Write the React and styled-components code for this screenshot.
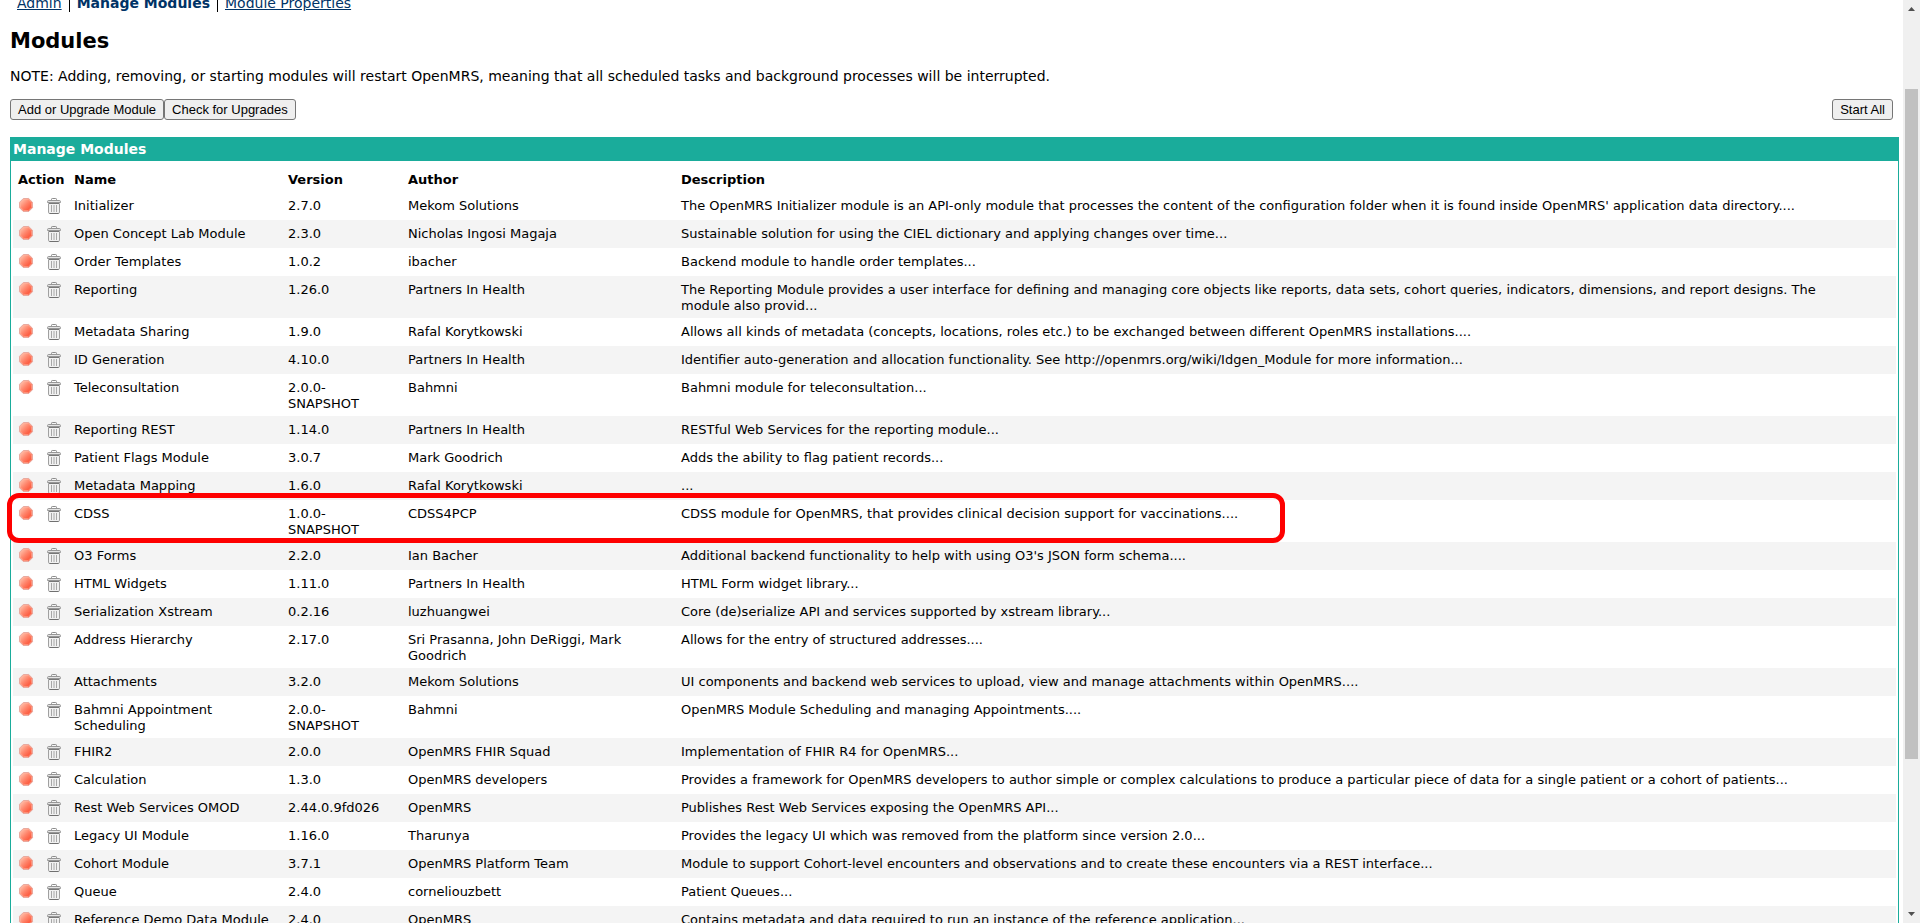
import React from "react";
import styled, { createGlobalStyle } from "styled-components";

const GlobalStyle = createGlobalStyle`
  body {
    margin: 0;
    background: #fff;
    color: #000;
    font-family: Verdana, "DejaVu Sans", sans-serif;
    font-size: 14px;
    line-height: 18px;
  }
`;

const Window = styled.div`
  display: flex;
  height: 100vh;
  overflow: hidden;
`;

const Page = styled.main`
  flex: 1;
  min-width: 0;
  padding: 0 4px 0 10px;
  margin-top: -6px;
`;

const Nav = styled.nav`
  display: flex;
  padding-left: 7px;
`;

const NavItem = styled.span`
  & + & {
    border-left: 1px solid #000;
    margin-left: 7px;
    padding-left: 7px;
  }
`;

const NavLink = styled.a`
  color: #003366;
  font-weight: ${(p) => (p.$active ? "bold" : "normal")};
  text-decoration: ${(p) => (p.$active ? "none" : "underline")};
`;

const Title = styled.h2`
  margin: 15px 0 0;
  font-size: 21px;
  line-height: 28px;
`;

const Note = styled.p`
  margin: 12px 0 14px;
`;

const Toolbar = styled.div`
  display: flex;
  padding-right: 6px;
  margin-bottom: 17px;
`;

const ToolButton = styled.button`
  height: 21px;
  padding: 1px 7px;
  border: 1px solid #767676;
  border-radius: 3px;
  background: #efefef;
  color: #000;
  font-family: Arial, "Liberation Sans", sans-serif;
  font-size: 13px;
  white-space: nowrap;
  margin-left: ${(p) => (p.$end ? "auto" : "0")};
`;

const BoxHeader = styled.h3`
  margin: 0;
  padding: 3px;
  background: #1aac9b;
  color: #fff;
  font-size: 14px;
  line-height: 18px;
`;

const Box = styled.section`
  padding: 2px;
  border: 1px solid #1aac9b;
  border-top: 0;
`;

const Table = styled.table`
  width: 100%;
  table-layout: fixed;
  border-collapse: collapse;
  font-size: 13px;
  line-height: 16px;
`;

const HeadCell = styled.th`
  width: ${(p) => p.$width || "auto"};
  box-sizing: border-box;
  padding: 9px 0 4px 5px;
  text-align: left;
`;

const Row = styled.tr`
  position: relative;
  height: 28px;
  &:nth-child(even) {
    background: #f4f4f4;
  }
`;

const Cell = styled.td`
  padding: 6px ${(p) => p.$right || "5px"} 4px 5px;
  vertical-align: top;
`;

const Actions = styled.div`
  display: flex;
  gap: 12px;
`;

const IconButton = styled.button`
  display: flex;
  align-items: flex-start;
  width: 16px;
  height: 18px;
  padding: 0;
  border: 0;
  background: none;
`;

const ActionCell = styled(Cell)`
  padding: 5px 0 0 5px;
`;

const Highlight = styled.span`
  position: absolute;
  z-index: 1;
  top: -7px;
  bottom: -1px;
  left: -6px;
  width: 1278px;
  box-sizing: border-box;
  border: 5px solid #fe0000;
  border-radius: 12px;
  pointer-events: none;
`;

const ScrollTrack = styled.div`
  display: flex;
  flex-direction: column;
  align-items: center;
  width: 17px;
  background: #f0f0f0;
`;

const ScrollArrow = styled.svg`
  display: block;
  width: 17px;
  height: 17px;
  fill: #505050;
`;

const ScrollRail = styled.div`
  display: flex;
  flex-direction: column;
  flex: 1;
  &::before {
    content: "";
    flex: 72;
  }
  &::after {
    content: "";
    flex: 147;
  }
`;

const ScrollThumb = styled.div`
  flex: 670;
  width: 13px;
  background: #c1c1c1;
`;

const StopIcon = () => (
  <svg width="16" height="16" viewBox="0 0 16 16" aria-hidden="true">
    <path d="M5.3 1.500h5.4l3.8 3.8v5.4l-3.8 3.8H5.300l-3.8-3.8V5.300z" fill="url(#stopFill)" stroke="#e8aaa0" strokeLinejoin="round" />
    <path d="M5.700 2.500h4.6l3.2 3.2v4.6l-3.2 3.2H5.700l-3.2-3.2V5.700z" fill="none" stroke="#ffb49f" strokeOpacity=".55" />
  </svg>
);

const TrashIcon = () => (
  <svg width="16" height="18" viewBox="0 0 16 18" aria-hidden="true">
    <path d="M5.500 3V2.300Q5.500 1.500 6.300 1.500h3.4q.8 0 .8.8V3" fill="none" stroke="#8c8c8c" />
    <path d="M1.500 5.500V4.600Q1.500 3.500 2.800 3.500h10.4q1.3 0 1.3 1.100v.9z" fill="#e4e4e4" stroke="#979797" />
    <path d="M2.500 6.500h11" stroke="#777" />
    <path d="M2.500 7v8.200q0 1.300 1.300 1.300h8.400q1.300 0 1.300-1.300V7" fill="#f1f1f1" stroke="#a0a0a0" />
    <path d="M5.500 8v7M8 8v7M10.500 8v7" stroke="#a8a8a8" />
    <path d="M3.500 16.500h9" stroke="#707070" />
  </svg>
);

const modules = [
  ["Initializer", "2.7.0", "Mekom Solutions", "The OpenMRS Initializer module is an API-only module that processes the content of the configuration folder when it is found inside OpenMRS' application data directory...."],
  ["Open Concept Lab Module", "2.3.0", "Nicholas Ingosi Magaja", "Sustainable solution for using the CIEL dictionary and applying changes over time..."],
  ["Order Templates", "1.0.2", "ibacher", "Backend module to handle order templates..."],
  ["Reporting", "1.26.0", "Partners In Health", "The Reporting Module provides a user interface for defining and managing core objects like reports, data sets, cohort queries, indicators, dimensions, and report designs. The module also provid..."],
  ["Metadata Sharing", "1.9.0", "Rafal Korytkowski", "Allows all kinds of metadata (concepts, locations, roles etc.) to be exchanged between different OpenMRS installations...."],
  ["ID Generation", "4.10.0", "Partners In Health", "Identifier auto-generation and allocation functionality. See http://openmrs.org/wiki/Idgen_Module for more information..."],
  ["Teleconsultation", "2.0.0-SNAPSHOT", "Bahmni", "Bahmni module for teleconsultation..."],
  ["Reporting REST", "1.14.0", "Partners In Health", "RESTful Web Services for the reporting module..."],
  ["Patient Flags Module", "3.0.7", "Mark Goodrich", "Adds the ability to flag patient records..."],
  ["Metadata Mapping", "1.6.0", "Rafal Korytkowski", "..."],
  ["CDSS", "1.0.0-SNAPSHOT", "CDSS4PCP", "CDSS module for OpenMRS, that provides clinical decision support for vaccinations....", true],
  ["O3 Forms", "2.2.0", "Ian Bacher", "Additional backend functionality to help with using O3's JSON form schema...."],
  ["HTML Widgets", "1.11.0", "Partners In Health", "HTML Form widget library..."],
  ["Serialization Xstream", "0.2.16", "luzhuangwei", "Core (de)serialize API and services supported by xstream library..."],
  ["Address Hierarchy", "2.17.0", "Sri Prasanna, John DeRiggi, Mark Goodrich", "Allows for the entry of structured addresses...."],
  ["Attachments", "3.2.0", "Mekom Solutions", "UI components and backend web services to upload, view and manage attachments within OpenMRS...."],
  ["Bahmni Appointment Scheduling", "2.0.0-SNAPSHOT", "Bahmni", "OpenMRS Module Scheduling and managing Appointments...."],
  ["FHIR2", "2.0.0", "OpenMRS FHIR Squad", "Implementation of FHIR R4 for OpenMRS..."],
  ["Calculation", "1.3.0", "OpenMRS developers", "Provides a framework for OpenMRS developers to author simple or complex calculations to produce a particular piece of data for a single patient or a cohort of patients..."],
  ["Rest Web Services OMOD", "2.44.0.9fd026", "OpenMRS", "Publishes Rest Web Services exposing the OpenMRS API..."],
  ["Legacy UI Module", "1.16.0", "Tharunya", "Provides the legacy UI which was removed from the platform since version 2.0..."],
  ["Cohort Module", "3.7.1", "OpenMRS Platform Team", "Module to support Cohort-level encounters and observations and to create these encounters via a REST interface..."],
  ["Queue", "2.4.0", "corneliouzbett", "Patient Queues..."],
  ["Reference Demo Data Module", "2.4.0", "OpenMRS", "Contains metadata and data required to run an instance of the reference application..."],
];

export default function App() {
  return (
    <Window>
      <GlobalStyle />
      <svg width="0" height="0" style={{ position: "absolute" }} aria-hidden="true">
        <linearGradient id="stopFill" x1="0" y1="0" x2="1" y2="1">
          <stop offset="0.1" stopColor="#ffc2ac" />
          <stop offset="0.5" stopColor="#ff8066" />
          <stop offset="0.9" stopColor="#fb4a2e" />
        </linearGradient>
      </svg>
      <Page>
        <Nav>
          <NavItem><NavLink href="#admin">Admin</NavLink></NavItem>
          <NavItem><NavLink href="#modules" $active>Manage Modules</NavLink></NavItem>
          <NavItem><NavLink href="#properties">Module Properties</NavLink></NavItem>
        </Nav>
        <Title>Modules</Title>
        <Note>
          NOTE: Adding, removing, or starting modules will restart OpenMRS, meaning that all scheduled tasks and
          background processes will be interrupted.
        </Note>
        <Toolbar>
          <ToolButton type="button">Add or Upgrade Module</ToolButton>
          <ToolButton type="button">Check for Upgrades</ToolButton>
          <ToolButton type="button" $end>Start All</ToolButton>
        </Toolbar>
        <BoxHeader>Manage Modules</BoxHeader>
        <Box>
          <Table>
            <thead>
              <tr>
                <HeadCell $width="56px">Action</HeadCell>
                <HeadCell $width="214px">Name</HeadCell>
                <HeadCell $width="120px">Version</HeadCell>
                <HeadCell $width="273px">Author</HeadCell>
                <HeadCell>Description</HeadCell>
              </tr>
            </thead>
            <tbody>
              {modules.map(([name, version, author, description, marked]) => (
                <Row key={name}>
                  <ActionCell>
                    <Actions>
                      <IconButton type="button" aria-label={`Stop ${name}`}><StopIcon /></IconButton>
                      <IconButton type="button" aria-label={`Unload ${name}`}><TrashIcon /></IconButton>
                    </Actions>
                    {marked && <Highlight />}
                  </ActionCell>
                  <Cell>{name}</Cell>
                  <Cell $right="16px">{version}</Cell>
                  <Cell>{author}</Cell>
                  <Cell $right="40px">{description}</Cell>
                </Row>
              ))}
            </tbody>
          </Table>
        </Box>
      </Page>
      <ScrollTrack aria-hidden="true">
        <ScrollArrow viewBox="0 0 17 17"><path d="M5 11h7L8.500 7z" /></ScrollArrow>
        <ScrollRail><ScrollThumb /></ScrollRail>
        <ScrollArrow viewBox="0 0 17 17"><path d="M5 6h7L8.500 10z" /></ScrollArrow>
      </ScrollTrack>
    </Window>
  );
}
